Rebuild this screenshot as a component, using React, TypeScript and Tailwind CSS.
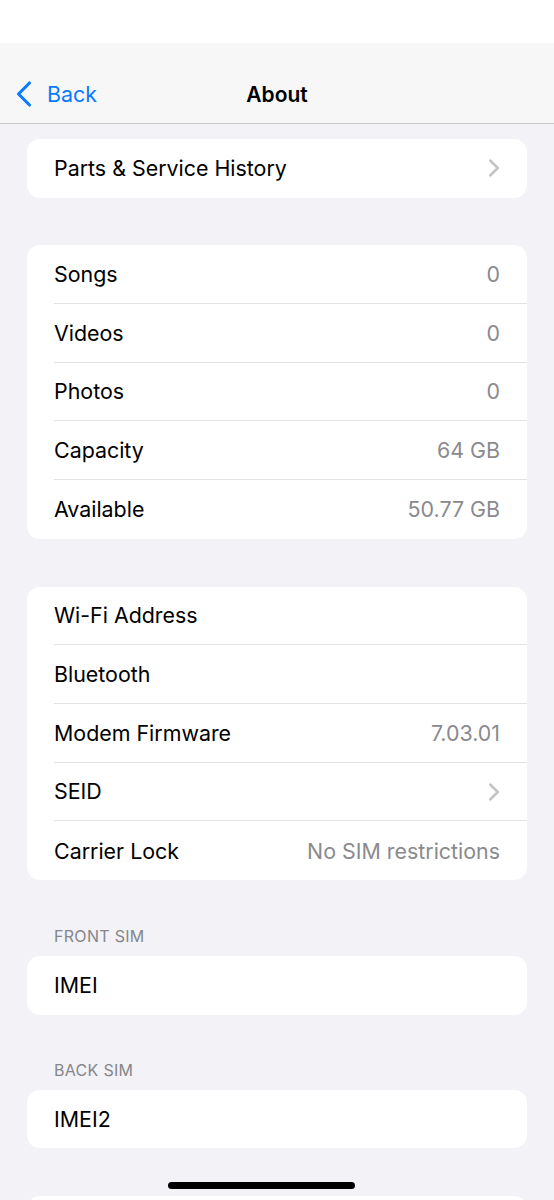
import { ChevronLeft, ChevronRight } from 'lucide-react'

type TRow = {
  label: string
  value?: string
  chevron?: boolean
}

const Row = (props: TRow & { last?: boolean }) => {
  const { label, value, chevron, last } = props
  return (
    <div className="flex h-[58.7px] pl-[27px]">
      <div
        className={
          'flex flex-1 items-center justify-between pr-[27px] ' +
          (last ? '' : 'border-b border-[#e3e3e6]')
        }
      >
        <span className="text-[21.4px] text-black">{label}</span>
        {value && <span className="text-[21.4px] text-[#8a8a8e]">{value}</span>}
        {chevron && (
          <ChevronRight
            className="mr-[-9px] h-[30px] w-[30px] text-[#c4c4c7]"
            strokeWidth={2}
          />
        )}
      </div>
    </div>
  )
}

const Card = (props: { rows: TRow[] }) => (
  <div className="mx-[27px] overflow-hidden rounded-[13px] bg-white">
    {props.rows.map((r, i) => (
      <Row key={r.label} {...r} last={i === props.rows.length - 1} />
    ))}
  </div>
)

const SectionHeader = (props: { title: string }) => (
  <div className="px-[54px] pb-[10px] text-[16px] leading-5 tracking-[0.3px] text-[#86868b]">
    {props.title}
  </div>
)

export default function App() {
  return (
    <div
      className="relative h-[1200px] overflow-hidden bg-[#f2f2f7]"
      style={{ fontFamily: 'Inter, "Noto Sans", sans-serif' }}
    >
      <div className="h-[43px] bg-white" />
      <div className="relative flex h-[81px] items-center border-b border-[#c8c8cc] bg-[#f7f7f8] pt-[22px]">
        <div className="flex items-center pl-[2px] text-[#0a7aff]">
          <ChevronLeft className="h-[44px] w-[44px]" strokeWidth={1.7} />
          <span className="ml-[1px] text-[21.4px]">Back</span>
        </div>
        <div className="pointer-events-none absolute inset-x-0 bottom-[13px] text-center text-[21px] font-semibold text-black">
          About
        </div>
      </div>

      <div className="flex flex-col pt-[15px]">
        <Card rows={[{ label: 'Parts & Service History', chevron: true }]} />
        <div className="h-[47.5px]" />
        <Card
          rows={[
            { label: 'Songs', value: '0' },
            { label: 'Videos', value: '0' },
            { label: 'Photos', value: '0' },
            { label: 'Capacity', value: '64 GB' },
            { label: 'Available', value: '50.77 GB' },
          ]}
        />
        <div className="h-[48px]" />
        <Card
          rows={[
            { label: 'Wi-Fi Address' },
            { label: 'Bluetooth' },
            { label: 'Modem Firmware', value: '7.03.01' },
            { label: 'SEID', chevron: true },
            { label: 'Carrier Lock', value: 'No SIM restrictions' },
          ]}
        />
        <div className="h-[46px]" />
        <SectionHeader title="FRONT SIM" />
        <Card rows={[{ label: 'IMEI' }]} />
        <div className="h-[45px]" />
        <SectionHeader title="BACK SIM" />
        <Card rows={[{ label: 'IMEI2' }]} />
        <div className="h-[48px]" />
        <div className="mx-[27px] h-[59px] rounded-[13px] bg-white" />
      </div>

      <div className="absolute bottom-[11px] left-[168px] h-[7px] w-[187px] rounded-full bg-black" />
    </div>
  )
}
